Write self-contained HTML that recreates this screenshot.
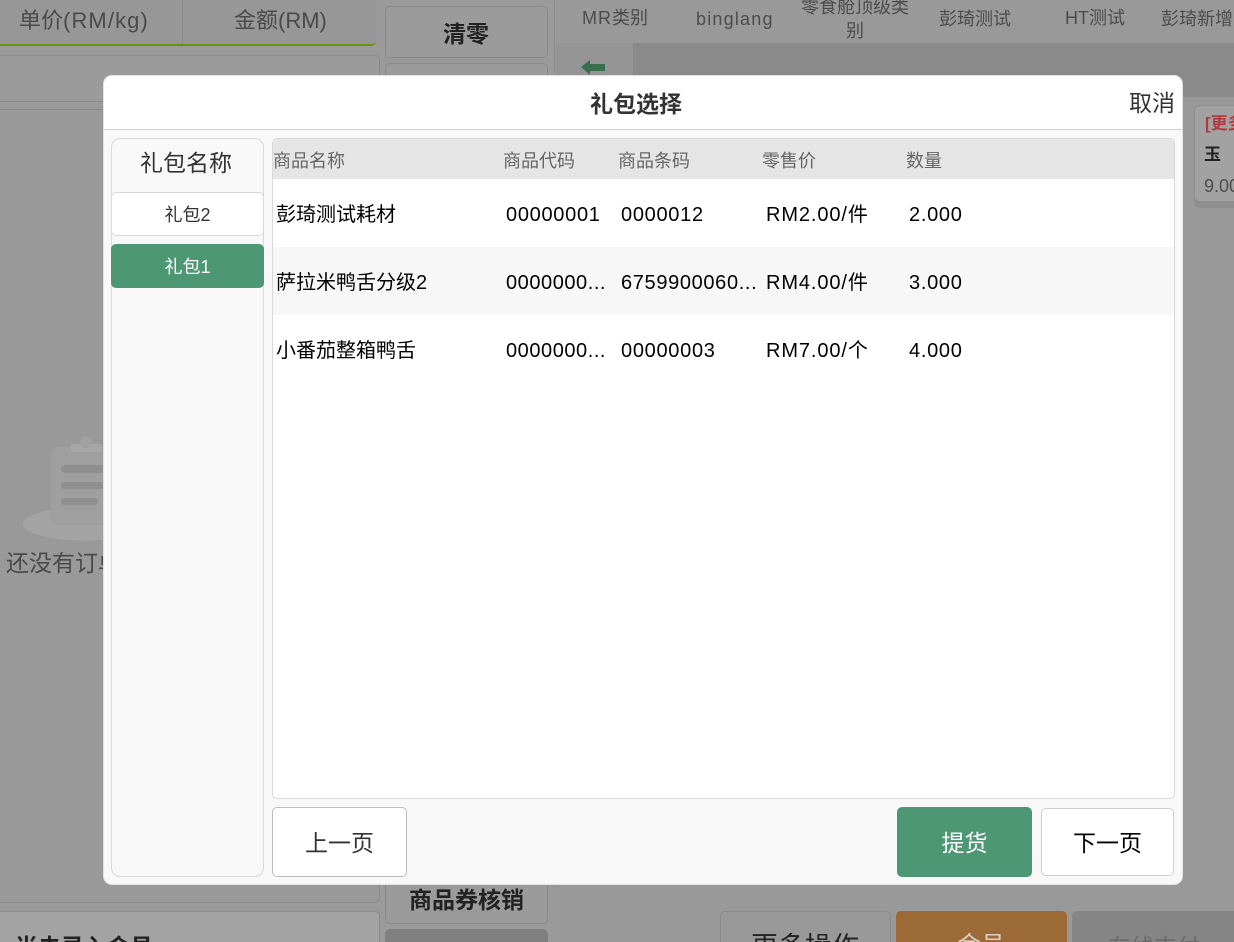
<!DOCTYPE html>
<html lang="zh"><head><meta charset="utf-8"><title>礼包选择</title>
<style>
*{box-sizing:border-box}
html,body{margin:0;padding:0;width:1234px;height:942px;overflow:hidden}
body{position:relative;background:#9a9a9a;font-family:"Liberation Sans","Noto Sans CJK SC",sans-serif}
#w{position:absolute;left:0;top:0;width:1234px;height:942px;overflow:hidden;background:#9a9a9a}
.a{position:absolute}
.t{position:absolute;white-space:nowrap;line-height:1}
.bgb{position:absolute;border:1px solid #8a8a8a;border-radius:5px;background:#9b9b9b}
.th{position:absolute;top:152px;font-size:18px;line-height:19px;color:#666;white-space:nowrap}
.td{position:absolute;font-size:20px;line-height:24px;color:#000;white-space:nowrap}
.tab{position:absolute;font-size:18px;line-height:24px;color:#4c4c4c;text-align:center;white-space:nowrap}
i{font-style:normal;letter-spacing:.7px}
</style></head><body><div id="w">
<!-- background page -->
<div class="a" style="left:0;top:0;width:376px;height:46px;background:#979797;border-bottom:2px solid #6f8f10;border-bottom-right-radius:5px"></div>
<div class="a" style="left:182px;top:0;width:1px;height:44px;background:#8d8d8d"></div>
<div class="t" style="left:19px;top:10px;font-size:22px;color:#4a4a4a">单价<i style="letter-spacing:1.1px">(RM/kg)</i></div>
<div class="t" style="left:234px;top:10px;font-size:22px;color:#4a4a4a">金额(RM)</div>
<div class="bgb" style="left:-6px;top:55px;width:386px;height:47px"></div>
<div class="bgb" style="left:-6px;top:109px;width:386px;height:794px;background:#999"></div>
<div class="bgb" style="left:-6px;top:911px;width:386px;height:40px;background:#a3a3a3"></div>
<div class="t" style="left:15px;top:936px;font-size:23px;font-weight:700;color:#222">尚未录入会员</div>
<div class="bgb" style="left:385px;top:6px;width:163px;height:52px"></div>
<div class="t" style="left:443px;top:23px;font-size:23px;font-weight:700;color:#222">清零</div>
<div class="bgb" style="left:385px;top:63px;width:163px;height:40px"></div>
<div class="bgb" style="left:385px;top:870px;width:163px;height:54px"></div>
<div class="t" style="left:409px;top:889px;font-size:23px;font-weight:700;color:#222">商品券核销</div>
<div class="a" style="left:385px;top:929px;width:163px;height:20px;background:#808080;border-radius:5px"></div>
<div class="a" style="left:554px;top:0;width:680px;height:942px;background:#999"></div>
<div class="a" style="left:554px;top:0;width:1px;height:110px;background:#8d8d8d"></div>
<div class="a" style="left:633px;top:43px;width:601px;height:54px;background:#8a8a8a"></div>
<div class="a" style="left:555px;top:43px;width:78px;height:54px;background:#959595"></div>
<svg class="a" style="left:580px;top:58px" width="26" height="18" viewBox="0 0 26 18"><path d="M1 9L10 2V6H25V13H10V17Z" fill="#38704f"/></svg>
<div class="tab" style="left:582px;top:6px"><i style="letter-spacing:1px">MR</i>类别</div>
<div class="tab" style="left:696px;top:7px"><i style="letter-spacing:1.2px">binglang</i></div>
<div class="tab" style="left:796px;top:-5px;width:118px;white-space:normal;line-height:24px">零食舱顶级类别</div>
<div class="tab" style="left:939px;top:7px">彭琦测试</div>
<div class="tab" style="left:1065px;top:6px">HT测试</div>
<div class="tab" style="left:1161px;top:7px">彭琦新增</div>
<div class="a" style="left:1194px;top:105px;width:60px;height:97px;background:#a2a2a2;border:1px solid #8e8e8e;border-radius:6px;box-shadow:0 6px 0 #8e8e8e"></div>
<div class="t" style="left:1205px;top:115px;font-size:17px;font-weight:700;color:#b13a3f">[更多</div>
<div class="t" style="left:1204px;top:146px;font-size:17px;font-weight:700;color:#222">玉</div>
<div class="t" style="left:1204px;top:177px;font-size:18px;color:#4c4c4c">9.00</div>
<!-- empty state illustration -->
<svg class="a" style="left:20px;top:430px" width="90" height="115" viewBox="0 0 90 115"><ellipse cx="66" cy="94" rx="63.5" ry="16.5" fill="#a3a3a3"/><rect x="30.5" y="17" width="72" height="78" rx="7" fill="#9f9f9f"/><rect x="50" y="14" width="32" height="8" rx="3" fill="#a6a6a6"/><circle cx="66" cy="12" r="6" fill="#a0a0a0"/><rect x="41" y="35" width="60" height="8" rx="4" fill="#8f8f8f"/><rect x="41" y="52" width="60" height="7" rx="3.5" fill="#8f8f8f"/><rect x="41" y="68" width="37" height="7" rx="3.5" fill="#8f8f8f"/></svg>
<div class="t" style="left:6px;top:552px;font-size:23px;color:#4a4a4a">还没有订单</div>
<!-- modal -->
<div class="a" style="left:103px;top:75px;width:1080px;height:810px;background:#f8f8f8;border:1px solid #e2e2e2;border-radius:9px;overflow:hidden">
<div class="a" style="left:0;top:0;width:1078px;height:54px;background:#fff;border-bottom:1px solid #d4d4d4"></div>
</div>
<div class="t" style="left:590px;top:93px;font-size:23px;font-weight:700;color:#333">礼包选择</div>
<div class="t" style="left:1129px;top:92px;font-size:23px;color:#333">取消</div>
<!-- sidebar -->
<div class="a" style="left:111px;top:138px;width:153px;height:739px;background:#f8f8f8;border:1px solid #d8d8d8;border-radius:9px"></div>
<div class="t" style="left:140px;top:152px;font-size:23px;color:#333">礼包名称</div>
<div class="a" style="left:111px;top:192px;width:153px;height:44px;background:#fff;border:1px solid #d8d8d8;border-radius:5px;text-align:center;font-size:18px;line-height:44px;color:#333">礼包2</div>
<div class="a" style="left:111px;top:244px;width:153px;height:44px;background:#4d9775;border-radius:5px;text-align:center;font-size:18px;line-height:46px;color:#fff">礼包1</div>
<!-- table -->
<div class="a" style="left:272px;top:138px;width:903px;height:661px;background:#fff;border:1px solid #d8d8d8;border-radius:5px;overflow:hidden">
<div class="a" style="left:0;top:0;width:901px;height:40px;background:#e5e5e5"></div>
<div class="a" style="left:0;top:108px;width:901px;height:68px;background:#f7f7f7"></div>
</div>
<div class="th" style="left:273px">商品名称</div>
<div class="th" style="left:503px">商品代码</div>
<div class="th" style="left:618px">商品条码</div>
<div class="th" style="left:762px">零售价</div>
<div class="th" style="left:906px">数量</div>
<div class="td" style="left:276px;top:203px">彭琦测试耗材</div>
<div class="td" style="left:506px;top:203px"><i>00000001</i></div>
<div class="td" style="left:621px;top:203px"><i>0000012</i></div>
<div class="td" style="left:766px;top:203px"><i style="letter-spacing:.9px">RM2.00/</i>件</div>
<div class="td" style="left:909px;top:203px"><i>2.000</i></div>
<div class="td" style="left:276px;top:271px">萨拉米鸭舌分级<i>2</i></div>
<div class="td" style="left:506px;top:271px"><i style="letter-spacing:.55px">0000000...</i></div>
<div class="td" style="left:621px;top:271px"><i style="letter-spacing:.65px">6759900060...</i></div>
<div class="td" style="left:766px;top:271px"><i style="letter-spacing:.9px">RM4.00/</i>件</div>
<div class="td" style="left:909px;top:271px"><i>3.000</i></div>
<div class="td" style="left:276px;top:339px">小番茄整箱鸭舌</div>
<div class="td" style="left:506px;top:339px"><i style="letter-spacing:.55px">0000000...</i></div>
<div class="td" style="left:621px;top:339px"><i>00000003</i></div>
<div class="td" style="left:766px;top:339px"><i style="letter-spacing:.9px">RM7.00/</i>个</div>
<div class="td" style="left:909px;top:339px"><i>4.000</i></div>
<!-- buttons -->
<div class="a" style="left:272px;top:807px;width:135px;height:70px;background:#fff;border:1px solid #bdbdbd;border-radius:5px;text-align:center;font-size:23px;line-height:70px;color:#333">上一页</div>
<div class="a" style="left:897px;top:807px;width:135px;height:70px;background:#4d9775;border-radius:5px;text-align:center;font-size:23px;line-height:73px;color:#fff">提货</div>
<div class="a" style="left:1041px;top:808px;width:133px;height:68px;background:#fff;border:1px solid #cfcfcf;border-radius:5px;text-align:center;font-size:23px;line-height:69px;color:#000">下一页</div>
<!-- bottom right -->
<div class="a" style="left:720px;top:911px;width:171px;height:40px;background:#999;border:1px solid #8a8a8a;border-radius:5px"></div>
<div class="t" style="left:751px;top:934px;font-size:27px;color:#222">更多操作</div>
<div class="a" style="left:896px;top:911px;width:171px;height:40px;background:#9c6a36;border-radius:5px"></div>
<div class="t" style="left:957px;top:934px;font-size:24px;color:#d9d0c4">会员</div>
<div class="a" style="left:1072px;top:911px;width:170px;height:40px;background:#858585;border-radius:5px"></div>
<div class="t" style="left:1108px;top:936px;font-size:23px;color:#6a6a6a">在线支付</div>
</div></body></html>
